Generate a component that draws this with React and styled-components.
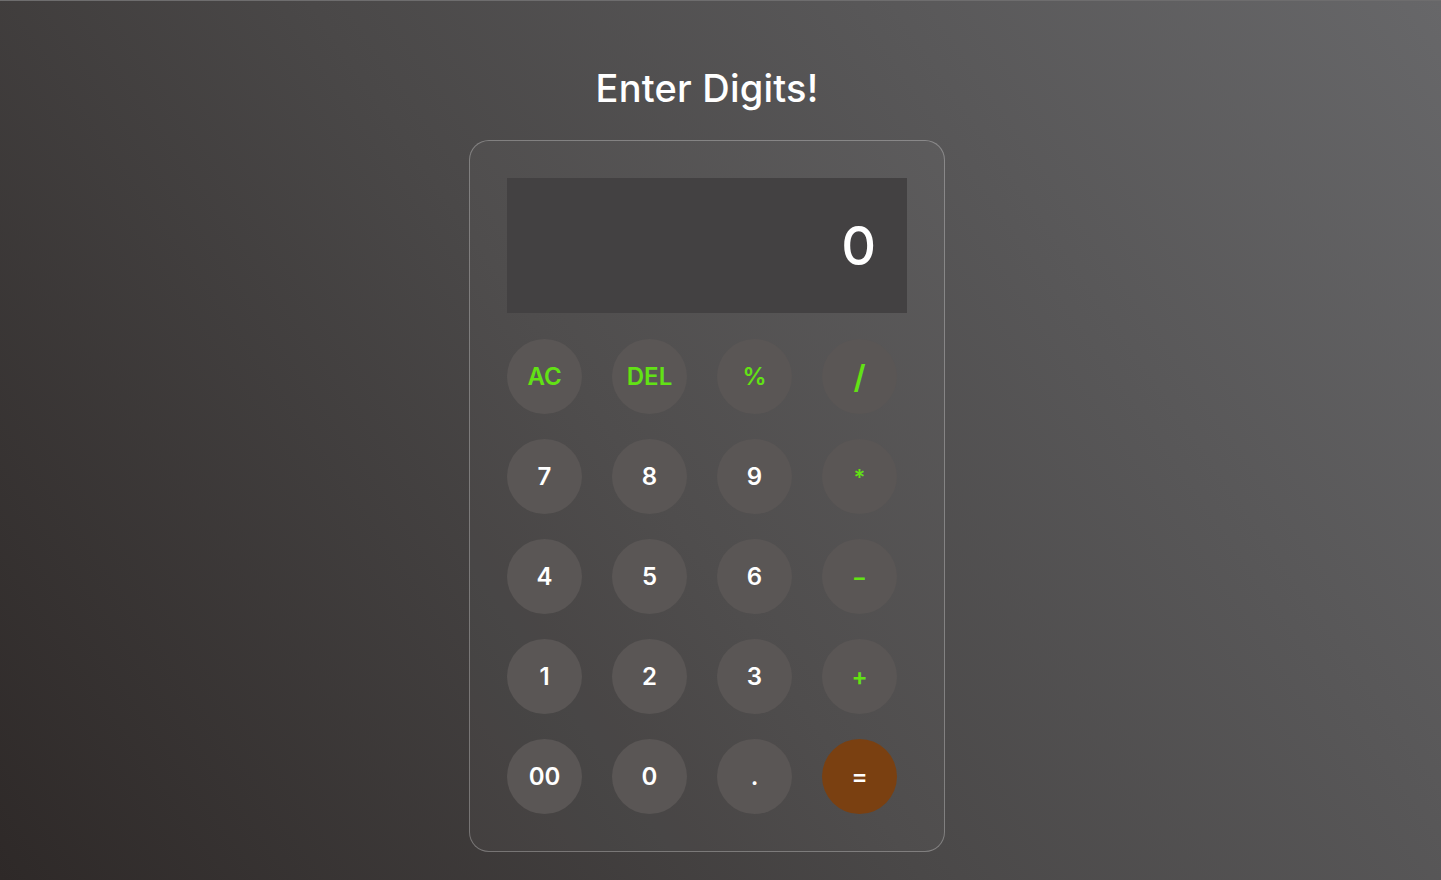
import React, { useState } from 'react';
import styled, { createGlobalStyle } from 'styled-components';

const GlobalStyle = createGlobalStyle`
  html, body {
    margin: 0;
    padding: 0;
  }
  body {
    min-height: 100vh;
    background: linear-gradient(55deg, #2e2928 0%, #4a4848 45%, #676769 100%);
    border-top: 1px solid #6e6d6e;
    box-sizing: border-box;
    font-family: Inter, "Open Sans", sans-serif;
  }
`;

const Page = styled.div`
  display: flex;
  flex-direction: column;
  align-items: center;
  padding-top: 63px;
  padding-right: 27px;
`;

const Title = styled.h1`
  margin: 0 0 28px;
  font-size: 38px;
  font-weight: 500;
  color: #ffffff;
  line-height: 48px;
  letter-spacing: 0.2px;
`;

const Card = styled.div`
  width: 400px;
  padding: 37px;
  border: 1px solid rgba(255, 255, 255, 0.28);
  border-radius: 20px;
  background: rgba(255, 255, 255, 0.03);
`;

const Screen = styled.div`
  height: 135px;
  background: #434142;
  display: flex;
  align-items: center;
  justify-content: flex-end;
  padding: 0 31px;
  box-sizing: border-box;
  color: #ffffff;
  font-size: 54px;
  font-weight: 500;
`;

const Keys = styled.div`
  display: grid;
  grid-template-columns: repeat(4, 75px);
  column-gap: 30px;
  row-gap: 25px;
  margin-top: 26px;
`;

const Key = styled.button`
  width: 75px;
  height: 75px;
  border: none;
  border-radius: 50%;
  background: ${p => (p.$equals ? '#7a4011' : '#5a5655')};
  color: ${p => (p.$accent ? '#62e214' : '#ffffff')};
  font-family: Inter, "Open Sans", sans-serif;
  font-size: ${p => p.$size || 24}px;
  font-weight: 600;
  display: flex;
  align-items: center;
  justify-content: center;
  padding: 0;
  cursor: pointer;
`;

const keys = [
  { label: 'AC', accent: true },
  { label: 'DEL', accent: true },
  { label: '%', accent: true },
  { label: '/', accent: true, size: 32 },
  { label: '7' },
  { label: '8' },
  { label: '9' },
  { label: '*', accent: true, size: 22 },
  { label: '4' },
  { label: '5' },
  { label: '6' },
  { label: '−', accent: true, size: 22 },
  { label: '1' },
  { label: '2' },
  { label: '3' },
  { label: '+', accent: true },
  { label: '00' },
  { label: '0' },
  { label: '.' },
  { label: '=', equals: true },
];

export default function App() {
  const [value] = useState('0');
  return (
    <>
      <GlobalStyle />
      <Page>
        <Title>Enter Digits!</Title>
        <Card>
          <Screen>{value}</Screen>
          <Keys>
            {keys.map(k => (
              <Key key={k.label} $accent={k.accent} $equals={k.equals} $size={k.size}>
                {k.label}
              </Key>
            ))}
          </Keys>
        </Card>
      </Page>
    </>
  );
}
